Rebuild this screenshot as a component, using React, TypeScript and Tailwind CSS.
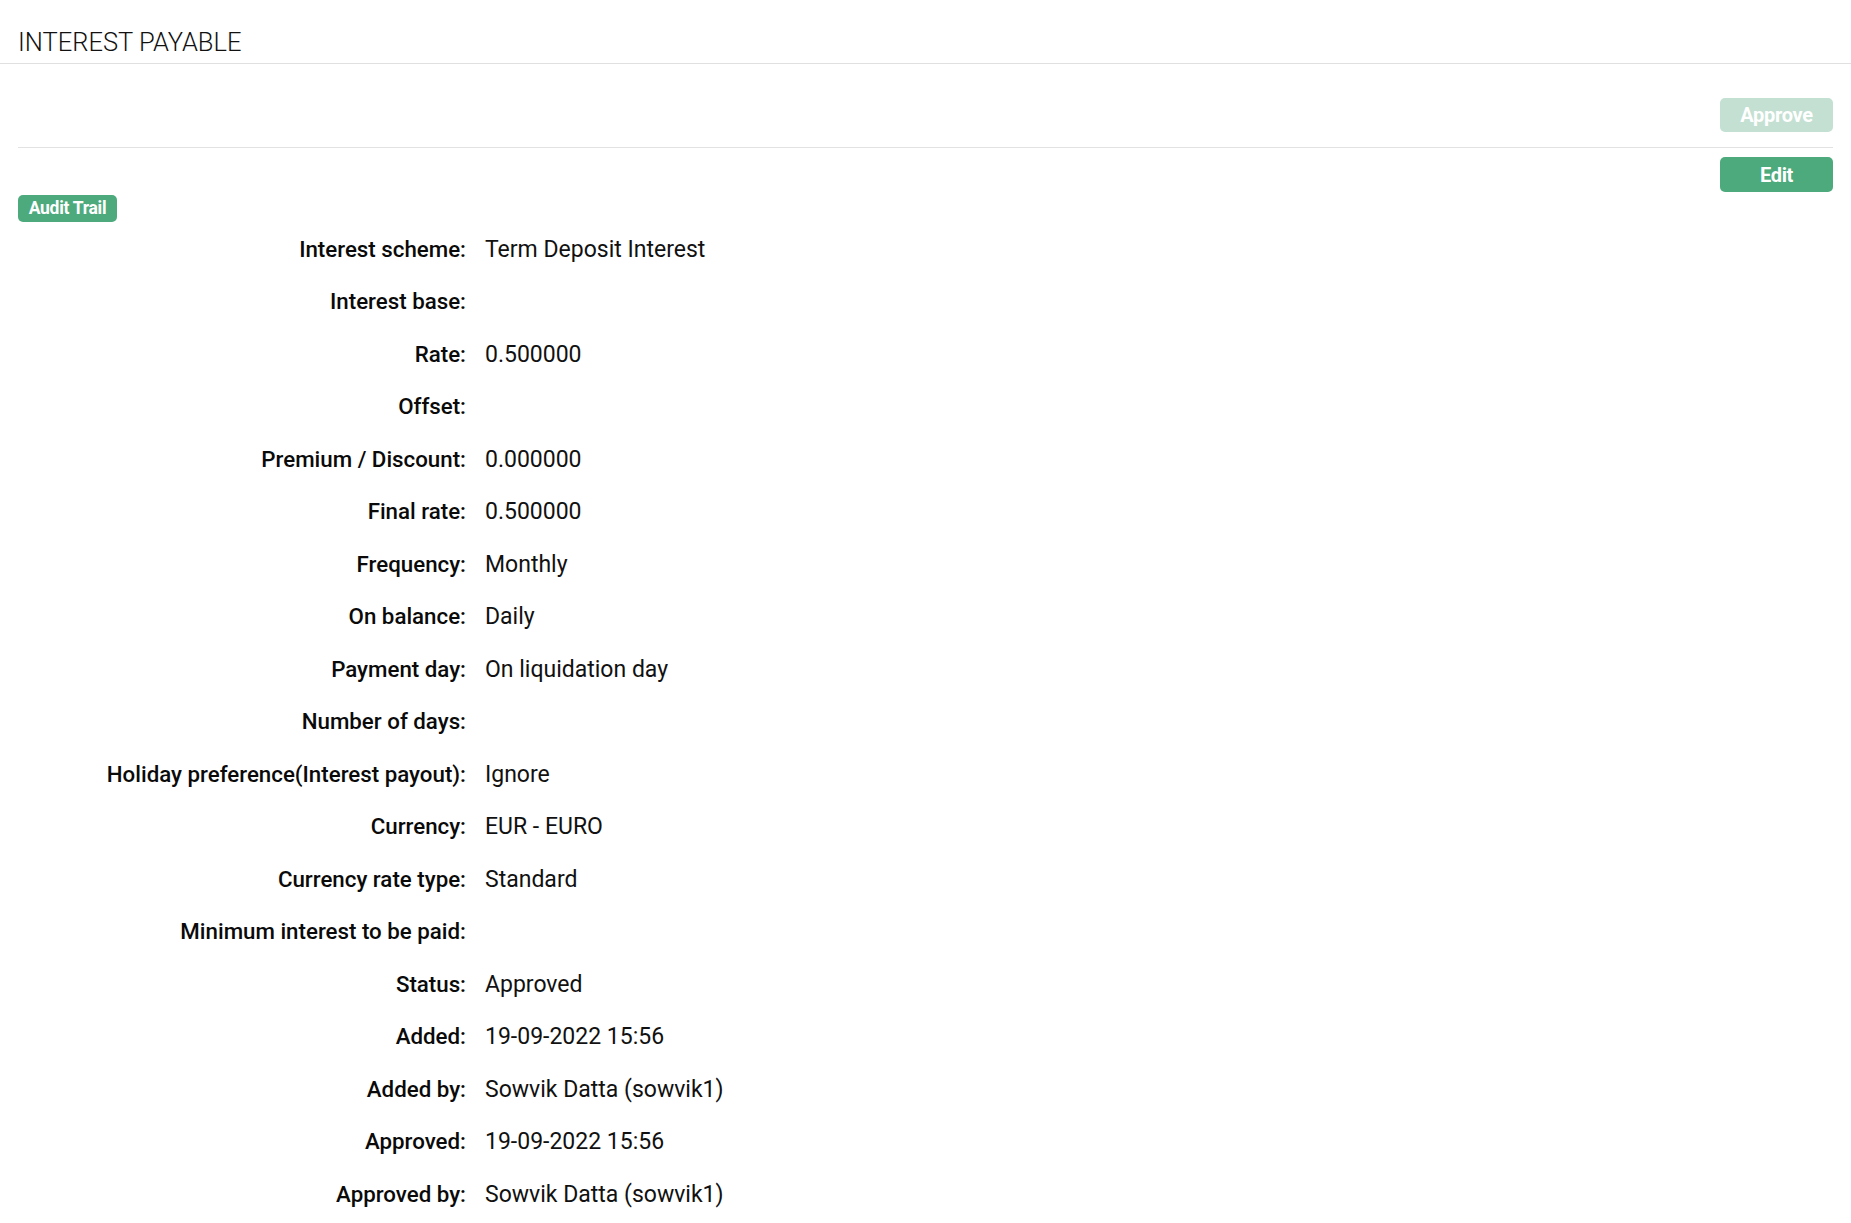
import React from "react";

const rows: [string, string][] = [
  ["Interest scheme:", "Term Deposit Interest"],
  ["Interest base:", ""],
  ["Rate:", "0.500000"],
  ["Offset:", ""],
  ["Premium / Discount:", "0.000000"],
  ["Final rate:", "0.500000"],
  ["Frequency:", "Monthly"],
  ["On balance:", "Daily"],
  ["Payment day:", "On liquidation day"],
  ["Number of days:", ""],
  ["Holiday preference(Interest payout):", "Ignore"],
  ["Currency:", "EUR - EURO"],
  ["Currency rate type:", "Standard"],
  ["Minimum interest to be paid:", ""],
  ["Status:", "Approved"],
  ["Added:", "19-09-2022 15:56"],
  ["Added by:", "Sowvik Datta (sowvik1)"],
  ["Approved:", "19-09-2022 15:56"],
  ["Approved by:", "Sowvik Datta (sowvik1)"],
];

export default function App() {
  return (
    <div
      className="min-h-screen bg-white text-[#111111]"
      style={{ fontFamily: "Roboto, 'Open Sans', sans-serif" }}
    >
      <div className="h-[64px] border-b border-[#e0e0e0] px-[18px] flex items-end pb-[8px]">
        <h1 className="text-[25.5px] font-light leading-none">INTEREST PAYABLE</h1>
      </div>
      <div className="px-[18px]">
        <div className="h-[84px] border-b border-[#e2e2e2] flex justify-end pt-[34px]">
          <button className="h-[34px] w-[113px] rounded-[5px] bg-[#c3e0d2] text-white text-[20px] font-bold tracking-[-0.3px]">
            Approve
          </button>
        </div>
        <div className="flex justify-end pt-[9px]">
          <button className="h-[35px] w-[113px] rounded-[5px] bg-[#4caa7c] text-white text-[20px] font-bold tracking-[-0.3px]">
            Edit
          </button>
        </div>
        <div className="pt-[3px]">
          <button className="h-[27px] w-[99px] rounded-[5px] bg-[#4caa7c] text-white text-[17.5px] font-bold tracking-[-0.3px] leading-none">
            Audit Trail
          </button>
        </div>
        <div className="flex flex-col mt-[1px]">
          {rows.map(([label, value]) => (
            <div key={label} className="h-[52.5px] flex items-center">
              <div className="flex items-baseline gap-x-[19px] leading-none">
                <div className="w-[448px] text-right text-[22.3px] font-medium text-[#0a0a0a] whitespace-nowrap">
                  {label}
                </div>
                <div className="text-[23px] font-normal whitespace-nowrap">{value || "\u00a0"}</div>
              </div>
            </div>
          ))}
        </div>
      </div>
    </div>
  );
}
